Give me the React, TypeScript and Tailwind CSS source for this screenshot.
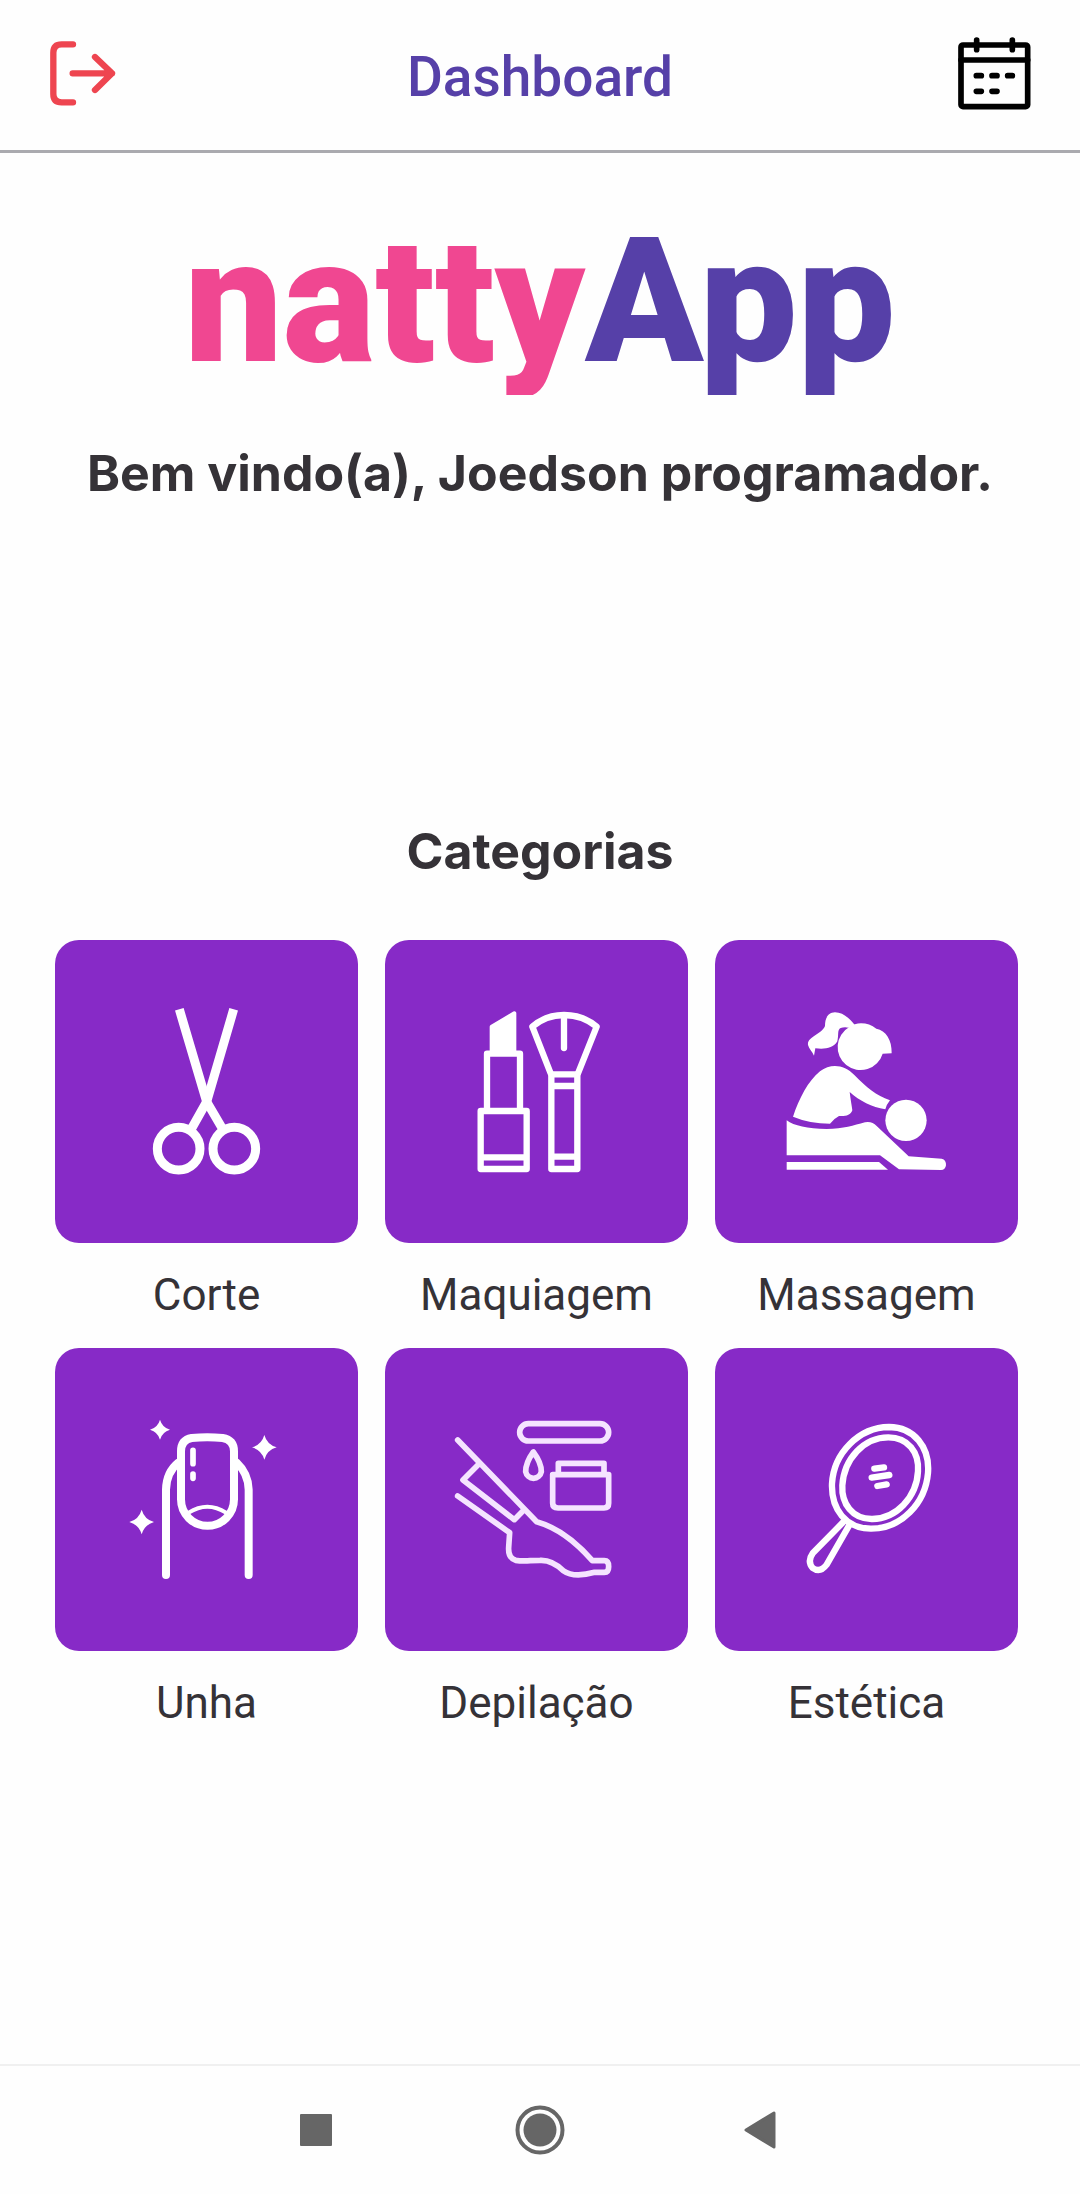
import type { ReactNode } from "react";

type Category = { name: string; viewBox: string; icon: ReactNode };

const sparkle = (cx: number, cy: number, r: number) =>
  `M${cx} ${cy - r}Q${cx + r * 0.22} ${cy - r * 0.22} ${cx + r} ${cy}Q${cx + r * 0.22} ${cy + r * 0.22} ${cx} ${cy + r}Q${cx - r * 0.22} ${cy + r * 0.22} ${cx - r} ${cy}Q${cx - r * 0.22} ${cy - r * 0.22} ${cx} ${cy - r}Z`;

const categories: Category[] = [
  {
    name: "Corte",
    viewBox: "15 30 909 909",
    icon: (
      <g strokeWidth="27" strokeLinecap="butt" strokeLinejoin="miter">
        <path d="M388 238L470 515L518 597" />
        <path d="M551 238L470 515L424 597" />
        <circle cx="386" cy="656" r="64" />
        <circle cx="553" cy="656" r="64" />
      </g>
    ),
  },
  {
    name: "Maquiagem",
    viewBox: "15 30 909 909",
    icon: (
      <g strokeWidth="19">
        <path d="M335 290L403 250V368H335Z" fill="white" strokeWidth="12" />
        <path d="M321 536V371H420V536" />
        <path d="M302 543H440V717H302ZM302 682H440" />
        <path d="M514 433H592V717H514ZM514 468H592M514 680H592" />
        <path d="M512 430L457 290Q497 255 552 255Q609 255 650 290L594 430" />
        <path d="M552 260V354" />
      </g>
    ),
  },
  {
    name: "Massagem",
    viewBox: "30 30 909 909",
    icon: (
      <g fill="white" stroke="none">
        <path d="M450 286C435 266 414 247 390 247C366 248 360 268 360 288C350 313 306 320 309 345C312 356 322 365 327 377L331 355C357 358 385 356 397 334C402 316 396 299 407 294Q418 290 431 293Z" />
        <path d="M468 280C485 280 500 285 514 296C543 302 561 329 560 370L533 371A69 69 0 1 1 433 291Q449 280 468 280Z" />
        <path d="M264 560C282 506 309 453 345 424C378 399 418 404 448 435C485 473 513 496 555 511Q545 523 541 538C501 531 464 513 434 486C437 510 440 525 442 541C437 557 421 559 402 558Q388 565 375 581Q314 581 264 560Z" />
        <path d="M245 571Q278 596 365 597C417 597 445 586 480 577Q501 573 515 588L611 679L710 686Q724 689 723 706Q721 720 708 720L582 718L525 676H245Z" />
        <path d="M245 696H522L549 719H245Z" />
        <circle cx="603" cy="571" r="62" />
      </g>
    ),
  },
  {
    name: "Unha",
    viewBox: "15 25 909 909",
    icon: (
      <g strokeWidth="24">
        <path d="M393 335Q393 301 425 295Q472 291 518 295Q552 301 552 335V479A79 79 0 0 1 393 479Z" />
        <path d="M385 369Q349 398 348 450V706M560 369Q595 402 596 450V706" />
        <path d="M416 519Q472 483 528 519" strokeWidth="12" />
        <path d="M429 332V372M429 403V416" strokeWidth="17" />
        <path d={sparkle(330, 270, 30)} fill="white" stroke="none" />
        <path d={sparkle(643, 323, 37)} fill="white" stroke="none" />
        <path d={sparkle(275, 547, 37)} fill="white" stroke="none" />
      </g>
    ),
  },
  {
    name: "Depilação",
    viewBox: "15 25 909 909",
    icon: (
      <g stroke="#f5e4ff" strokeWidth="17">
        <rect x="419" y="252" width="267" height="52" rx="26" />
        <path d="M460 337Q437 369 437 396A24 25 0 0 0 484 396Q484 369 460 337Z" />
        <path d="M535 402V371H672V402M518 405H686V491Q686 505 672 505H534Q518 505 518 491Z" />
        <path d="M233 301L470 546C530 563 585 603 637 663H673Q686 663 686 681Q686 698 673 698H644C604 709 572 709 550 693Q516 660 480 662C448 662 435 666 407 662Q384 655 386 623L389 579L233 469" />
        <path d="M296 374L249 421L403 540L428 515" />
      </g>
    ),
  },
  {
    name: "Estética",
    viewBox: "30 25 909 909",
    icon: (
      <g strokeWidth="19">
        <path d="M552 262C627 262 675 323 669 400C661 491 589 568 497 567C423 566 378 509 381 432C386 340 462 263 552 262Z" />
        <path d="M550 293C609 293 643 338 639 395C635 473 573 539 500 538C442 538 409 492 412 437C417 358 476 293 550 293Z" />
        <path d="M417 545L323 641Q306 665 323 685Q345 701 365 675L432 558" />
        <path d="M508 387L537 383M500 414L553 406M517 439L545 434" />
      </g>
    ),
  },
];

export default function App() {
  return (
    <div className="flex min-h-screen flex-col bg-[#fefefe] font-[Roboto,sans-serif] text-[#353237]">
      <header className="grid h-[153px] grid-cols-[1fr_auto_1fr] items-center border-b-[3px] border-[#aaaaaf] px-[30px]">
        <button type="button" aria-label="Sair" className="justify-self-start">
          <svg viewBox="0 0 330 330" className="size-[110px]" fill="none" stroke="#ee4550" strokeWidth="19" strokeLinecap="round" strokeLinejoin="round">
            <path d="M129 73H95Q70 73 70 98V222Q70 247 95 247H129M128 160H246M195 111L246 160L195 210" />
          </svg>
        </button>
        <h1 className="pt-1 text-[55px] leading-[64px] font-medium text-[#5640a8]">Dashboard</h1>
        <button type="button" aria-label="Agenda" className="justify-self-end">
          <svg viewBox="0 0 330 330" className="size-[110px]" fill="none" stroke="black" strokeWidth="17" strokeLinecap="round" strokeLinejoin="round">
            <rect x="63" y="75" width="200" height="185" rx="6" />
            <path d="M63 120H263M110 60V89M217 60V89M109 167H124M156 167H171M203 167H217M109 214H124M156 214H171" />
          </svg>
        </button>
      </header>

      <main className="flex flex-col">
        <div className="mt-[60px] h-[182px] overflow-hidden text-center text-[174px] leading-[178px] font-black text-[#5640a8]">
          <span className="text-[#f04791]">natty</span>App
        </div>
        <p className="mt-[46px] text-center font-[Inter,sans-serif] text-[50px] leading-[64px] font-bold">
          Bem vindo(a), Joedson programador.
        </p>
        <h2 className="mt-[314px] text-center font-[Inter,sans-serif] text-[50px] leading-[64px] font-bold">
          Categorias
        </h2>
        <div className="mt-[57px] grid grid-cols-3 gap-x-[27px] gap-y-[27px] pr-[62px] pl-[55px]">
          {categories.map((c) => (
            <button key={c.name} type="button" className="flex flex-col items-center">
              <span className="block aspect-square w-full rounded-3xl bg-[#872ac7]">
                <svg viewBox={c.viewBox} className="size-full" fill="none" stroke="white" strokeLinecap="round" strokeLinejoin="round" aria-hidden="true">
                  {c.icon}
                </svg>
              </span>
              <span className="mt-[26px] text-[44px] leading-[52px]">{c.name}</span>
            </button>
          ))}
        </div>
      </main>

      <nav aria-label="Sistema" className="mt-auto flex h-[130px] items-center justify-center gap-[174px] border-t-2 border-[#f0f0f0]">
        <button type="button" aria-label="Recentes">
          <svg viewBox="0 0 50 50" className="size-[50px]" fill="#666666">
            <rect x="9" y="9" width="32" height="32" rx="1" />
          </svg>
        </button>
        <button type="button" aria-label="Início">
          <svg viewBox="0 0 50 50" className="size-[50px]" fill="#666666">
            <circle cx="25" cy="25" r="22.5" fill="none" stroke="#666666" strokeWidth="4" />
            <circle cx="25" cy="25" r="16.5" />
          </svg>
        </button>
        <button type="button" aria-label="Voltar">
          <svg viewBox="0 0 50 50" className="size-[50px]" fill="#666666" stroke="#666666" strokeWidth="3" strokeLinejoin="round">
            <path d="M7 25L35 8V42Z" />
          </svg>
        </button>
      </nav>
    </div>
  );
}
